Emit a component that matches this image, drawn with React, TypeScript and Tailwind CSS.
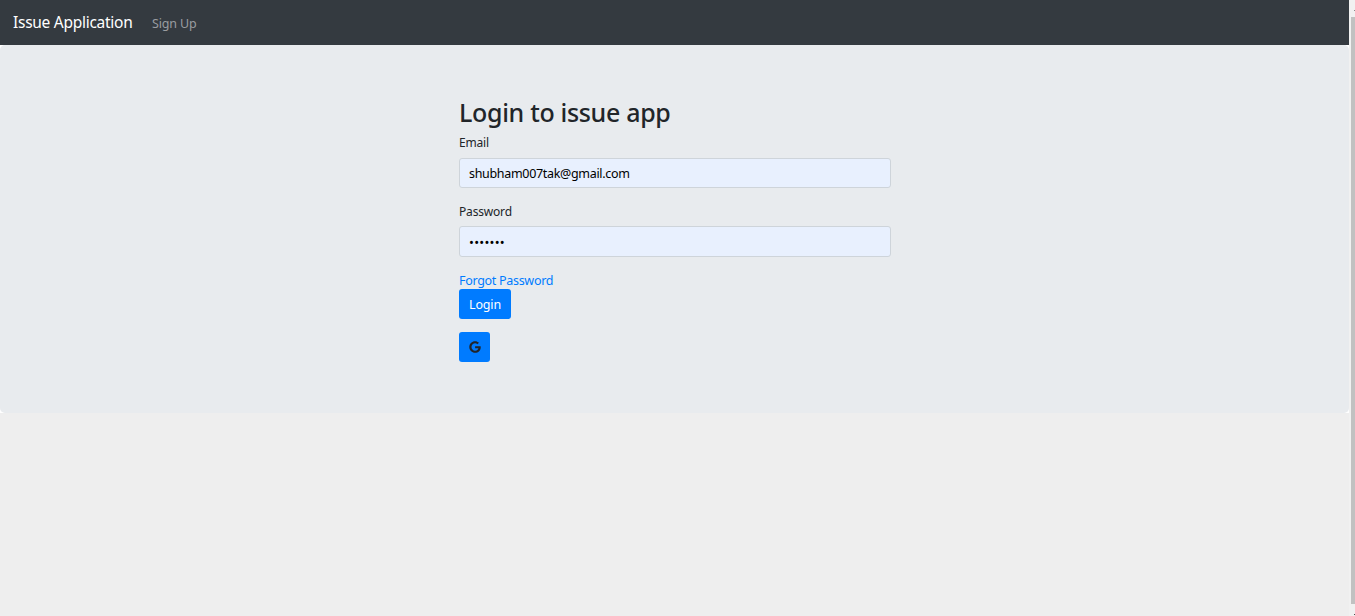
import { FaGoogle } from "react-icons/fa";

const fieldClass =
  "block w-full rounded-[3px] border border-[#ced4da] bg-[#e8f0fe] px-[9px] text-black outline-none";

export default function App() {
  return (
    <div className="flex h-[616px] w-full overflow-hidden bg-[#eeeeee] font-['Noto_Sans',sans-serif] text-[12.5px] text-[#212529]">
      <div className="w-[1349px] shrink-0">
        <nav className="flex h-[45px] items-center bg-[#343a40] pl-[13px]">
          <a className="w-[139px] pb-px text-[15.5px] leading-[22px] tracking-[-0.27px] whitespace-nowrap text-white">
            Issue Application
          </a>
          <a className="pt-0.5 leading-[18px] tracking-[-0.15px] whitespace-nowrap text-[#9a9da0]">Sign Up</a>
        </nav>
        <div className="bg-white">
          <main className="h-[368px] rounded-[5px] bg-[#e8ebee] pt-[50px] pl-[459px]">
            <form className="flex w-[432px] flex-col items-start" onSubmit={(e) => e.preventDefault()}>
              <h2 className="h-[38px] text-[25px] leading-[34px] font-medium tracking-[-0.32px] whitespace-nowrap">
                Login to issue app
              </h2>
              <label htmlFor="email" className="h-[25px] text-[12px] leading-[19px] tracking-[-0.2px] whitespace-nowrap">
                Email
              </label>
              <input
                id="email"
                type="email"
                defaultValue="shubham007tak@gmail.com"
                className={`${fieldClass} h-[30px] text-[12.5px] tracking-[-0.32px]`}
              />
              <label htmlFor="password" className="mt-[14px] h-[24px] text-[12px] leading-[19px] tracking-[-0.18px] whitespace-nowrap">
                Password
              </label>
              <input
                id="password"
                type="password"
                defaultValue="1234567"
                className={`${fieldClass} h-[31px] text-[13px] tracking-[0.25px]`}
              />
              <a className="mt-[14px] h-[18px] leading-[19px] tracking-[-0.3px] whitespace-nowrap text-[#007bff]">
                Forgot Password
              </a>
              <button className="h-[30px] w-[52px] rounded-[3px] bg-[#007bff] pt-0.5 text-center tracking-[-0.15px] whitespace-nowrap text-white">
                Login
              </button>
              <button
                type="button"
                aria-label="Google"
                className="mt-[13px] flex h-[30px] w-[31px] items-center justify-center rounded-[3px] bg-[#007bff]"
              >
                <FaGoogle size={12} />
              </button>
            </form>
          </main>
        </div>
      </div>
      <div className="flex grow flex-col items-end bg-[#f1f1f1] pt-[10px]">
        <div className="h-px w-px bg-[#8a8a8a]" />
        <div className="mt-[6px] h-[587px] w-1 bg-[#c1c1c1]" />
        <div className="mt-[10px] h-px w-px bg-[#505050]" />
      </div>
    </div>
  );
}
